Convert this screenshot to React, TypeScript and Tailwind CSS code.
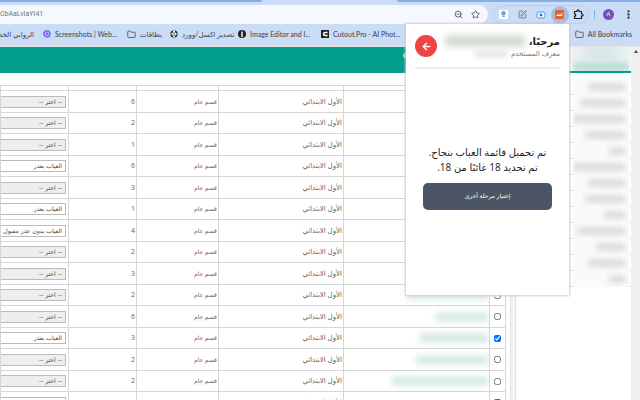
import type { ReactNode } from 'react';
import { ArrowLeft, Folder, Globe, MoreVertical, Search, SquarePen, Star, ZoomOut } from 'lucide-react';
import clsx from 'clsx';

type Reason = 'none' | 'excused' | 'unexcused';

const REASON_LABELS: Record<Reason, string> = {
  none: '-- اختر --',
  excused: 'الغياب بعذر',
  unexcused: 'الغياب بدون عذر مقبول',
};

interface Row {
  section: number;
  reason: Reason;
  checked?: boolean;
  name: string;
}

const ROWS: Row[] = [
  { section: 6, reason: 'none', name: 'w-16' },
  { section: 2, reason: 'none', name: 'w-16' },
  { section: 1, reason: 'none', name: 'w-16' },
  { section: 6, reason: 'excused', checked: true, name: 'w-16' },
  { section: 3, reason: 'none', name: 'w-16' },
  { section: 1, reason: 'excused', checked: true, name: 'w-16' },
  { section: 4, reason: 'unexcused', checked: true, name: 'w-16' },
  { section: 2, reason: 'none', name: 'w-16' },
  { section: 3, reason: 'none', name: 'w-16' },
  { section: 2, reason: 'none', name: 'w-20' },
  { section: 6, reason: 'none', name: 'w-13' },
  { section: 3, reason: 'excused', checked: true, name: 'w-17' },
  { section: 2, reason: 'none', name: 'w-18' },
  { section: 2, reason: 'none', name: 'w-24' },
  { section: 3, reason: 'excused', checked: true, name: 'w-0' },
];

const MENU_WIDTHS = ['w-9', 'w-11', 'w-13', 'w-10', 'w-4', 'w-13', 'w-9', 'w-10', 'w-5', 'w-12', 'w-7', 'w-9', 'w-4'];

export default function App() {
  return (
    <div className="relative h-screen overflow-hidden bg-white font-['Open_Sans','Noto_Sans','DejaVu_Sans',sans-serif] text-[#444]">
      <BrowserBar />
      <BookmarksBar />
      <div dir="rtl" className="flex">
        <div className="flex h-screen w-[9px] shrink-0 justify-center bg-[#f0f0f0] pt-[3px]">
          <svg viewBox="0 0 4 3" className="h-[3px] w-1">
            <path d="M2 0 4 3H0z" fill="#444" />
          </svg>
        </div>
        <Sidebar />
        <main className="min-w-0 flex-1 bg-white">
          <header className="h-[26px] bg-[#009d8b] pr-[110px] text-[12px] leading-4 text-white">›</header>
          <div className="mt-3 flex items-start">
            <div className="h-screen w-[6px] shrink-0 border-x border-[#e2e2e2] bg-[#f4f4f4]" />
            <div className="min-w-0 flex-1 pr-1">
              <AbsenceTable />
            </div>
          </div>
        </main>
      </div>
      <Popup />
    </div>
  );
}

function BrowserBar() {
  return (
    <div className="bg-[#cbdcf7]">
      <div className="flex h-[2px] justify-between">
        <div className="w-[41%] rounded-br-sm bg-[#86ade8]" />
        <div className="w-[38%] rounded-bl-sm bg-[#86ade8]" />
      </div>
      <div className="flex h-[22px] items-center pt-[2px] text-[#3c4043]">
        <div className="flex h-[19px] min-w-0 flex-1 items-center rounded-r-full bg-[#f5f8fd] pr-2">
          <span className="flex-1 font-[Roboto,sans-serif] text-[7px] text-[#777]">CbAaLvIaYI41</span>
          <button aria-label="Zoom" className="mr-2">
            <ZoomOut size={9} />
          </button>
          <button aria-label="Bookmark this page">
            <Star size={9} />
          </button>
        </div>
        <div className="ml-[5px] grid h-[19px] w-24 grid-cols-5 items-center justify-items-center rounded-full border border-[#b9cff3]">
          <button aria-label="Hijri date" className="flex size-[9px] justify-center bg-white">
            <svg viewBox="0 0 9 9" className="size-[9px]">
              <circle cx="4.5" cy="3.2" r="2.2" fill="#6f9fca" />
              <path d="M3 6.5h3M4 5v1" stroke="#8fb4d4" />
            </svg>
          </button>
          <button aria-label="Edit">
            <SquarePen size={9} strokeWidth={2.5} className="text-[#777]" />
          </button>
          <button aria-label="Capture">
            <svg viewBox="0 0 10 8" className="h-2 w-[10px]" fill="none">
              <rect x="1" y="1" width="8" height="6" rx="2" fill="#fff" stroke="#4a97f0" />
              <path d="M5 2.5v3M3.500 4h3" stroke="#1a66e0" strokeWidth="1.3" />
            </svg>
          </button>
          <button aria-label="Absence" className="flex size-[18px] items-center justify-center rounded-full bg-[#a9bcdc]">
            <svg viewBox="0 0 9 9" className="size-[9px]">
              <rect width="9" height="9" rx="1" fill="#e2632f" />
              <path d="M1.5 5.5h5.500V3.500M5 3.500v2M3 4v1.500" stroke="#fff" strokeWidth=".9" fill="none" />
            </svg>
          </button>
          <button aria-label="Extensions">
            <svg viewBox="0 0 11 11" className="size-[11px]" fill="none" stroke="#222" strokeWidth="1.2">
              <path d="M1.500 2.500H4V2a1 1 0 0 1 2.200 0v.5h2.300V5h.5a1 1 0 0 1 0 2.200h-.5v2.300h-7V7.300a1.200 1.200 0 0 0 0-2.500z" />
            </svg>
          </button>
        </div>
        <div className="ml-[5px] h-[9px] w-px bg-[#86ade8]" />
        <button className="ml-2 size-[11px] rounded-full bg-[#7b4dbd] text-[6px] leading-[11px] text-white">A</button>
        <button aria-label="Menu" className="mr-[6px] ml-[9px]">
          <MoreVertical size={11} strokeWidth={3} className="text-[#222]" />
        </button>
      </div>
    </div>
  );
}

function Bookmark({ icon, label, className }: { icon?: ReactNode; label: string; className?: string }) {
  return (
    <a href="#" className={clsx('flex shrink-0 items-center gap-1 whitespace-nowrap', className)}>
      {icon}
      <span>{label}</span>
    </a>
  );
}

function BookmarksBar() {
  return (
    <nav className="flex h-[23px] items-center border-b border-[#e3e3e3] bg-[#cbdcf7] pr-2 pb-[2px] font-[Lato,'DejaVu_Sans',sans-serif] text-[7px] text-[#3c4043]">
      <div className="flex w-[43px] shrink-0 justify-end pr-[9px]">
        <Bookmark label="الروابي الخضـ" />
      </div>
      <Bookmark
        className="w-[84px]"
        label="Screenshots | Web..."
        icon={
          <svg viewBox="0 0 9 9" className="size-2">
            <path d="M4.500 0a4.300 4.300 0 1 0 2 8l2 1-.6-2.200A4.300 4.300 0 0 0 4.500 0z" fill="#7a6cf5" />
            <circle cx="4.500" cy="4.300" r="2" fill="none" stroke="#d9d5ff" strokeWidth=".8" />
          </svg>
        }
      />
      <Bookmark className="w-[43px]" label="بطاقات" icon={<Folder size={9} />} />
      <Bookmark
        className="w-[68px]"
        label="تصدير اكسل/وورد"
        icon={<Globe size={8} strokeWidth={3} fill="#222" className="text-[#222] [&>path]:stroke-white" />}
      />
      <Bookmark
        className="w-[83px]"
        label="Image Editor and I..."
        icon={
          <svg viewBox="0 0 8 8" className="size-2">
            <circle cx="4" cy="4" r="4" fill="#222" />
            <path d="M4 2v5" stroke="#fff" strokeWidth="1.400" />
            <path d="M4 .5v1.500" stroke="#e44" strokeWidth="1.400" />
          </svg>
        }
      />
      <Bookmark
        className="w-[84px]"
        label="Cutout.Pro - AI Phot..."
        icon={
          <svg viewBox="0 0 8 8" className="size-2">
            <rect width="8" height="8" fill="#222" />
            <path d="M6.500 2.500H4a1.500 1.500 0 0 0 0 3h2.500" fill="none" stroke="#fff" strokeWidth="1.400" />
          </svg>
        }
      />
      <Search size={8} className="shrink-0" />
      <Bookmark className="ml-auto" label="All Bookmarks" icon={<Folder size={9} />} />
    </nav>
  );
}

function Sidebar() {
  return (
    <aside className="h-screen w-[115px] shrink-0 bg-white">
      <div className="flex h-[26px] items-end border-b-2 border-[#009d8b] bg-[#f3f4f4] pr-[2px]">
        <div className="h-6 w-14 overflow-hidden bg-[#eaf1f0]">
          <div className="mx-auto h-3 w-8 bg-[#d3e6e3] blur-[4px]" />
          <div className="mt-1 h-2 bg-[#b3dad4] blur-[3px]" />
        </div>
      </div>
      <ul className="pt-[6px]">
        {MENU_WIDTHS.map((width, i) => (
          <li key={i} className="h-4 border-b border-[#ddd] pr-[2px]">
            <div className="h-4 w-14 overflow-hidden bg-[#fafafa] pt-[5px] pr-1">
              <div className={clsx('h-[6px] bg-[#d2d2d2] blur-[3px]', width)} />
            </div>
          </li>
        ))}
      </ul>
    </aside>
  );
}

function AbsenceTable() {
  return (
    <table className="w-full table-fixed border-collapse text-right text-[7px] leading-[10px] text-[#666] [&_td]:border [&_td]:border-[#d6d6d6] [&_td]:px-px [&_td]:py-0">
      <colgroup>
        <col className="w-4" />
        <col className="w-[146px]" />
        <col className="w-[125px]" />
        <col className="w-[82px]" />
        <col className="w-[68px]" />
        <col />
      </colgroup>
      <tbody>
        <tr className="h-[5px]">
          <td />
          <td />
          <td />
          <td />
          <td />
          <td />
        </tr>
        {ROWS.map((row, i) => (
          <tr key={i} className="even:h-[22px] odd:h-[21px]">
            <td>
              <input
                type="checkbox"
                defaultChecked={row.checked}
                aria-label={`طالب ${i + 1}`}
                className="mx-auto block size-[7px] accent-[#0075ff]"
              />
            </td>
            <td>
              <div className={clsx('h-2 bg-[#cfe6e2] blur-[3px]', row.name)} />
            </td>
            <td>الأول الابتدائي</td>
            <td className="text-[6px]">قسم عام</td>
            <td>{row.section}</td>
            <td>
              <select
                aria-label="نوع الغياب"
                defaultValue={row.reason}
                disabled={row.reason === 'none'}
                className="mr-px block h-3 w-24 appearance-none border border-[#bbb] bg-white pr-[3px] font-['DejaVu_Sans',sans-serif] text-[6px] leading-[10px] text-[#444] opacity-100 disabled:bg-[#eee]"
              >
                {Object.entries(REASON_LABELS).map(([value, label]) => (
                  <option key={value} value={value}>
                    {label}
                  </option>
                ))}
              </select>
            </td>
          </tr>
        ))}
      </tbody>
    </table>
  );
}

function Popup() {
  return (
    <section
      dir="rtl"
      className="absolute top-6 right-[71px] h-[271px] w-[163px] bg-white px-[9px] pt-[9px] shadow-[0_0_2px_1px_#c9cbd6]"
    >
      <div className="flex items-start justify-between border-b-2 border-[#eee] pb-2">
        <div>
          <div className="flex items-center gap-1">
            <h1 className="text-[10px] leading-4 font-bold text-[#222]">مرحبًا،</h1>
            <div className="h-3 w-20 bg-[#d5dcd3] blur-[3px]" />
          </div>
          <div className="flex items-center gap-1">
            <p className="text-[7px] leading-[10px] text-[#777]">معرف المستخدم</p>
            <div className="h-2 w-8 bg-[#eaeaea] blur-[2px]" />
          </div>
        </div>
        <button
          aria-label="رجوع"
          className="mt-[2px] flex size-[22px] items-center justify-center rounded-full bg-[#ef4444] text-white"
        >
          <ArrowLeft size={11} strokeWidth={3} />
        </button>
      </div>
      <div className="mt-[76px] px-2 text-center">
        <p className="text-[10px] leading-[15px] whitespace-nowrap text-[#222]">
          تم تحميل قائمة الغياب بنجاح.
          <br />
          تم تحديد 18 غائبًا من 18.
        </p>
        <button className="mt-2 h-[27px] w-full rounded-[5px] bg-[#4b5563] text-[6px] text-white">إختيار مرحلة أخرى</button>
      </div>
    </section>
  );
}
